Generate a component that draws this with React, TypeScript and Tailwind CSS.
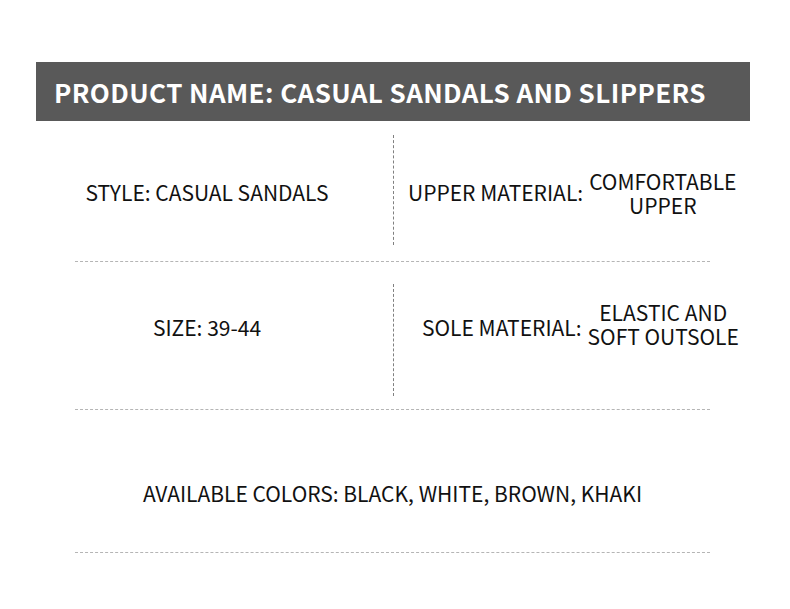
import React from 'react';

const font = { fontFamily: '"Noto Sans CJK SC", "Noto Sans", sans-serif' };

const App = () => {
  return (
    <div className="w-[790px] h-[609px] bg-white text-[#111] overflow-hidden" style={font}>
      <div className="pt-[62px] pl-[36px]">
        <div className="w-[714px] h-[59px] bg-[#595959] flex items-center pl-[18px]">
          <h1 className="text-[26px] font-bold text-white tracking-[0.4px]">
            PRODUCT NAME: CASUAL SANDALS AND SLIPPERS
          </h1>
        </div>
      </div>

      <div className="ml-[75px] w-[635px]">
        {/* row 1 */}
        <div className="h-[141px] flex border-b border-dashed border-[#b5b5b5]">
          <div className="w-[318px] shrink-0 pr-[54px] pt-[4px] flex items-center justify-center text-[21px] whitespace-nowrap">
            STYLE: CASUAL SANDALS
          </div>
          <div className="shrink-0 mt-[14px] h-[110px] border-l border-dashed border-[#808080]" />
          <div className="w-[316px] shrink-0 flex items-center pl-[14px] pt-[4px] text-[21px] whitespace-nowrap">
            <span>UPPER MATERIAL:</span>
            <span className="ml-[6px] text-center leading-[24px]">
              COMFORTABLE
              <br />
              UPPER
            </span>
          </div>
        </div>

        {/* row 2 */}
        <div className="h-[148px] flex border-b border-dashed border-[#b5b5b5]">
          <div className="w-[318px] shrink-0 pr-[54px] pb-[16px] flex items-center justify-center text-[21px] whitespace-nowrap">
            SIZE: 39-44
          </div>
          <div className="shrink-0 mt-[22px] h-[112px] border-l border-dashed border-[#808080]" />
          <div className="w-[316px] shrink-0 flex items-center pl-[28px] pb-[16px] text-[21px] whitespace-nowrap">
            <span>SOLE MATERIAL:</span>
            <span className="ml-[6px] text-center leading-[24px] -mt-[8px]">
              ELASTIC AND
              <br />
              SOFT OUTSOLE
            </span>
          </div>
        </div>

        {/* row 3 */}
        <div className="h-[143px] pt-[68px] border-b border-dashed border-[#b5b5b5] text-center text-[21px]">
          AVAILABLE COLORS: BLACK, WHITE, BROWN, KHAKI
        </div>
      </div>
    </div>
  );
};

export default App;
